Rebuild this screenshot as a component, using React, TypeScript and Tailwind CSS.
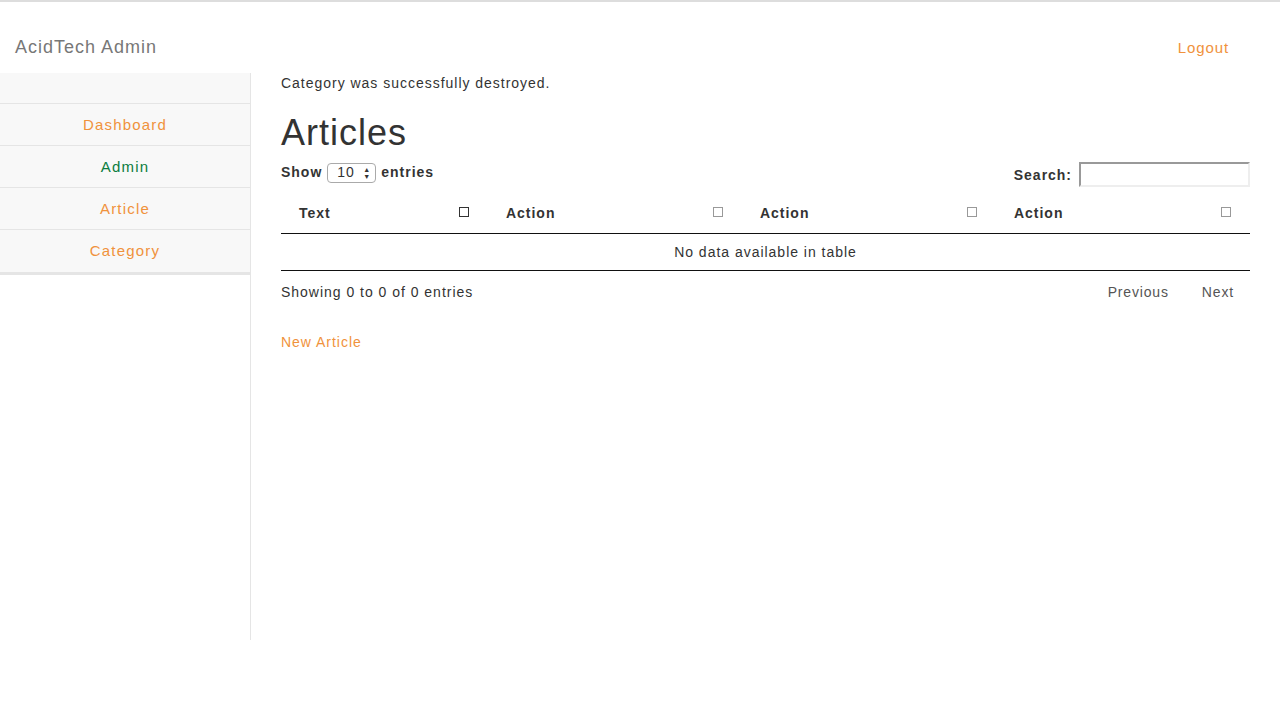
import React from 'react';

const orange = 'text-[#f0923c]';

function SortBox({ dark }: { dark?: boolean }) {
  return (
    <span
      className={`inline-block w-[10px] h-[10px] border ${dark ? 'border-[#333]' : 'border-[#999]'}`}
    />
  );
}

export default function App() {
  const nav = [
    { label: 'Dashboard', color: orange },
    { label: 'Admin', color: 'text-[#0b7d3f]' },
    { label: 'Article', color: orange },
    { label: 'Category', color: orange },
  ];
  const cols = [
    { label: 'Text', w: 'w-[207px]', dark: true },
    { label: 'Action', w: 'w-[254px]' },
    { label: 'Action', w: 'w-[254px]' },
    { label: 'Action', w: 'w-[254px]' },
  ];

  return (
    <div
      className="min-h-[726px] bg-white text-[#333] text-[14px] tracking-[0.07em]"
      style={{ fontFamily: '"Liberation Sans", Arial, sans-serif' }}
    >
      <div className="h-[2px] bg-[#ddd]" />

      {/* Top bar */}
      <div className="flex items-center justify-between h-[71px] pt-[20px] pl-[15px] pr-[51px]">
        <span className="text-[18px] text-[#777] tracking-[0.055em]">AcidTech Admin</span>
        <a className={`${orange} text-[15px] mt-[2px] tracking-[0.06em]`}>Logout</a>
      </div>

      <div className="flex">
        {/* Sidebar */}
        <div className="w-[251px] h-[567px] border-r border-[#e5e5e5] shrink-0">
          <div className="bg-[#f8f8f8] border-b-[3px] border-[#e5e5e5]">
            <div className="h-[31px] border-b border-[#e5e5e5]" />
            {nav.map((n, i) => (
              <div
                key={n.label}
                className={`h-[42px] flex items-center justify-center pt-[1px] text-[15px] tracking-[0.08em] ${n.color} ${
                  i < nav.length - 1 ? 'border-b border-[#e5e5e5]' : ''
                }`}
              >
                {n.label}
              </div>
            ))}
          </div>
        </div>

        {/* Main */}
        <div className="pl-[30px] w-[999px]">
          <p className="leading-[20px]">Category was successfully destroyed.</p>
          <h1 className="text-[36px] leading-[40px] mt-[20px] tracking-[0.028em]">Articles</h1>

          <div className="flex justify-between items-start mt-[9px]">
            <div className="flex items-center gap-[5px] font-bold">
              <span>Show</span>
              <div className="relative w-[49px] h-[20px] border border-[#aaa] rounded-[4px] flex items-center pl-[9px] font-normal text-[14px]">
                10
                <span className="absolute right-[4px] top-[2px] text-[7px] leading-[7px] text-[#333] flex flex-col">
                  <span>▲</span>
                  <span>▼</span>
                </span>
              </div>
              <span>entries</span>
            </div>
            <div className="flex items-center gap-[7px] font-bold">
              <span className="mt-[1px]">Search:</span>
              <input className="w-[171px] h-[25px] border-2 border-t-[#999] border-l-[#999] border-r-[#eee] border-b-[#eee] outline-none" />
            </div>
          </div>

          {/* Table */}
          <div className="mt-[9px]">
            <div className="flex border-b border-[#111] h-[38px]">
              {cols.map((c, i) => (
                <div
                  key={i}
                  className={`${c.w} flex items-center justify-between pl-[18px] pr-[19px] font-bold`}
                >
                  <span className="-mt-[2px]">{c.label}</span>
                  <span className="mb-[5px]">
                    <SortBox dark={c.dark} />
                  </span>
                </div>
              ))}
            </div>
            <div className="h-[37px] border-b border-[#111] flex items-center justify-center">
              No data available in table
            </div>
          </div>

          <div className="flex justify-between items-center h-[43px]">
            <span>Showing 0 to 0 of 0 entries</span>
            <div className="flex gap-[33px] pr-[16px] text-[#555] tracking-[0.06em]">
              <span>Previous</span>
              <span>Next</span>
            </div>
          </div>

          <a className={`${orange} block mt-[18px]`}>New Article</a>
        </div>
      </div>
    </div>
  );
}
